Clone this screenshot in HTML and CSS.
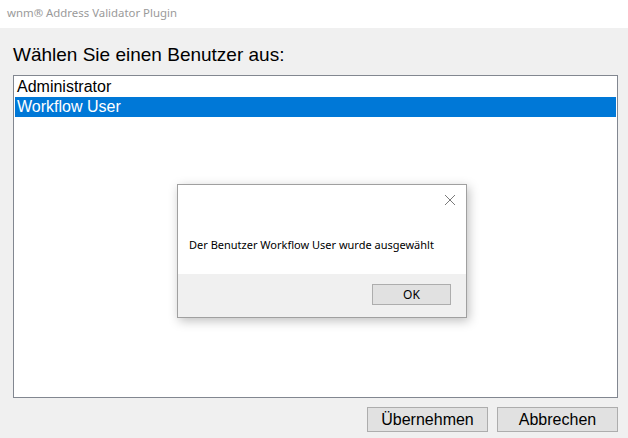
FILE: index.html
```html
<!DOCTYPE html>
<html lang="de">
<head>
    <meta charset="UTF-8">
    <meta name="viewport" content="width=device-width, initial-scale=1.0">
    <title>wnm® Address Validator Plugin</title>
    <link rel="stylesheet" href="styles.css">
</head>
<body>
    <div class="titlebar">wnm® Address Validator Plugin</div>

    <div class="content">
        <h1 class="prompt">Wählen Sie einen Benutzer aus:</h1>

        <ul class="user-list">
            <li class="user-item">Administrator</li>
            <li class="user-item selected">Workflow User</li>
        </ul>

        <div class="actions">
            <button class="win-button">Übernehmen</button>
            <button class="win-button">Abbrechen</button>
        </div>
    </div>

    <!-- message box shown after a user is picked -->
    <div class="msgbox">
        <div class="msgbox-body">
            <svg class="msgbox-close" width="12" height="12" viewBox="0 0 12 12">
                <path d="M1 1 L11 11 M11 1 L1 11" stroke="#7a7a7a" stroke-width="1" fill="none"/>
            </svg>
            <p class="msgbox-text">Der Benutzer Workflow User wurde ausgewählt</p>
        </div>
        <div class="msgbox-footer">
            <button class="ok-button">OK</button>
        </div>
    </div>
</body>
</html>
```

FILE: styles.css
```css
body {
    margin: 0;
    padding: 0;
    width: 628px;
    height: 438px;
    overflow: hidden;
    background-color: #f0f0f0;
    font-family: 'Liberation Sans', Arial, sans-serif;
    color: #000;
    position: relative;
}

.titlebar {
    height: 28px;
    line-height: 26px;
    padding-left: 7px;
    background-color: #fff;
    color: #9a9a9a;
    font-family: 'Noto Sans', sans-serif;
    font-size: 11.4px;
}

.content {
    padding: 0 10px 0 13px;
}

.prompt {
    margin: 16px 0 9px 0;
    font-size: 19px;
    font-weight: normal;
    line-height: 22px;
}

.user-list {
    list-style: none;
    margin: 0;
    padding: 1px;
    box-sizing: border-box;
    width: 605px;
    height: 323px;
    background-color: #fff;
    border: 1px solid #828790;
}

.user-item {
    height: 20px;
    line-height: 20px;
    padding-left: 2px;
    font-size: 16px;
}

.user-item.selected {
    background-color: #0078d7;
    color: #fff;
}

.actions {
    display: flex;
    justify-content: flex-end;
    gap: 9px;
    margin-top: 9px;
}

.win-button {
    width: 121px;
    height: 25px;
    padding: 0;
    background-color: #e1e1e1;
    border: 1px solid #adadad;
    font-family: 'Liberation Sans', Arial, sans-serif;
    font-size: 16px;
    color: #000;
}

/* floating message box */
.msgbox {
    position: absolute;
    left: 177px;
    top: 184px;
    width: 290px;
    box-sizing: border-box;
    border: 1px solid #a0a0a0;
    background-color: #f0f0f0;
    box-shadow: 2px 3px 10px rgba(0, 0, 0, 0.25);
    font-family: 'Noto Sans', sans-serif;
}

.msgbox-body {
    position: relative;
    height: 89px;
    background-color: #fff;
}

.msgbox-close {
    position: absolute;
    right: 10px;
    top: 9px;
}

.msgbox-text {
    margin: 0;
    padding: 51px 0 0 11px;
    font-size: 11px;
    line-height: 18px;
}

.msgbox-footer {
    height: 43px;
    display: flex;
    justify-content: flex-end;
    align-items: flex-start;
    padding: 10px 15px 0 0;
    box-sizing: border-box;
}

.ok-button {
    width: 79px;
    height: 21px;
    padding: 0;
    background-color: #e1e1e1;
    border: 1px solid #adadad;
    font-family: 'Noto Sans', sans-serif;
    font-size: 12px;
    color: #000;
}
```
